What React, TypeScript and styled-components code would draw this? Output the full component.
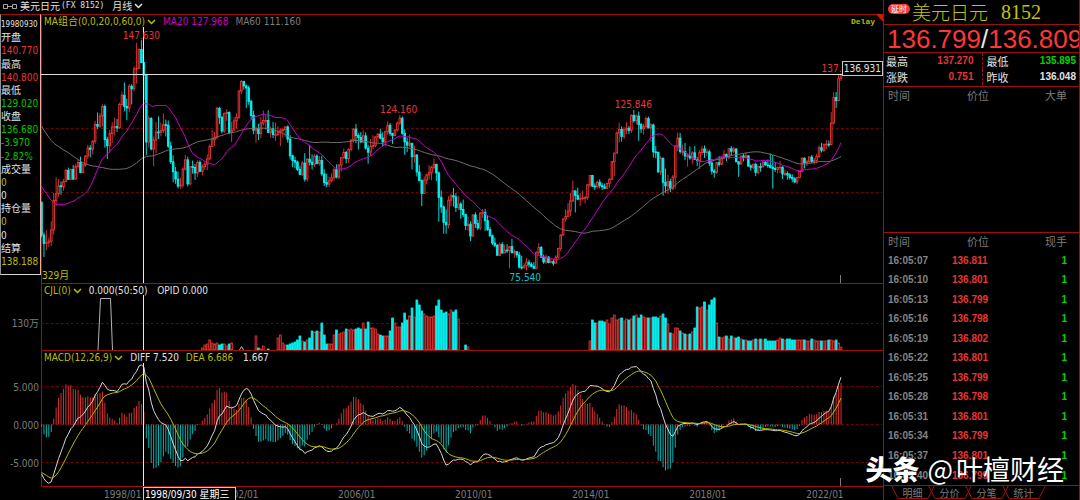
import React from 'react';
import styled, { createGlobalStyle } from 'styled-components';

const RED = '#e83636';
const CYAN = '#00f0f0';
const LINE = '#9c1208';
const YELLOW = '#bcbc00';
const WHITE = '#e2e2e2';
const GREY = '#7c7c7c';
const MAGENTA = '#cc00cc';
const GREEN = '#00c800';

const SANS = '"DejaVu Sans Condensed", "Noto Sans CJK SC", sans-serif';
const CJK = '"Noto Sans CJK SC", sans-serif';

/* Monthly USD/JPY, March 1995 to July 2022: closes, highs and lows, one line a year. */
const CLOSES = `
86.7 84.1 84.4 84.8 88.3 97.5 99.6 102.1 101.8 103.4
106.9 104.1 107.2 104.2 108.1 109.4 106.2 108.6 111.4 113.9 113.5 116.0
121.3 120.7 123.9 126.9 116.5 114.6 118.4 120.5 120.6 120.2 127.5 130.4
126.9 126.4 133.2 132.4 138.6 138.8 144.7 140.6 136.7 115.8 123.1 113.6
116.4 118.9 118.8 119.4 121.2 121.0 114.5 109.6 106.5 104.2 102.0 102.3
107.3 110.2 102.7 108.1 107.8 106.1 109.4 106.6 108.1 108.9 110.5 114.4
116.5 117.3 126.3 123.5 119.2 124.7 125.0 118.8 119.5 122.4 123.5 131.7
134.7 133.3 132.7 128.5 124.1 119.5 119.9 118.4 121.7 122.5 122.5 118.8
119.9 118.1 118.1 118.9 119.3 119.7 120.5 116.7 111.5 110.0 109.5 107.2
105.7 109.2 104.2 110.4 109.5 108.8 111.4 109.1 110.0 105.8 103.1 102.6
103.7 104.6 107.1 104.8 108.6 110.9 112.5 110.6 113.5 116.4 119.8 117.8
117.2 115.8 117.7 113.9 112.6 114.4 114.7 117.4 118.2 117.0 115.8 119.0
121.0 118.5 117.8 119.5 121.7 123.2 118.5 115.8 114.8 115.4 111.2 111.7
106.4 103.7 99.7 103.9 105.5 106.2 107.9 108.8 106.1 98.5 95.5 90.7
89.9 97.6 99.0 98.6 95.3 96.4 94.7 93.1 89.7 90.1 86.4 93.0
90.3 88.9 93.5 93.8 91.2 88.4 86.5 84.2 83.5 80.4 83.7 81.1
82.0 81.8 83.1 81.2 81.5 80.5 76.7 76.6 77.1 78.2 77.6 76.9
76.3 81.2 82.8 79.8 78.3 79.8 78.1 78.4 77.9 79.8 82.5 86.7
91.7 92.5 94.2 97.4 100.5 99.1 97.9 98.2 98.3 98.4 102.4 105.3
102.0 101.8 103.2 102.2 101.8 101.3 102.8 104.1 109.6 112.3 118.6 119.7
117.5 119.6 120.1 119.4 124.1 122.5 123.9 121.2 119.9 120.6 123.1 120.2
121.1 112.7 112.6 106.4 110.7 103.2 102.1 103.4 101.3 104.8 114.5 117.0
112.8 112.8 111.4 111.5 110.8 112.4 110.3 110.0 112.5 113.6 112.5 112.7
109.2 106.7 106.3 109.3 108.8 110.8 111.9 111.0 113.7 112.9 113.6 109.6
108.9 111.4 110.9 111.4 108.3 107.9 108.8 106.3 108.1 108.0 109.5 108.6
108.4 107.9 107.5 107.2 107.8 107.9 105.8 105.9 105.5 104.7 104.3 103.3
104.7 106.6 110.7 109.3 109.6 111.1 109.7 110.0 111.3 114.0 113.2 115.1
115.1 115.0 121.7 129.7 128.7 135.7 136.9`;

const HIGHS = `
97.0 87.5 88.2 85.9 91.0 99.9 104.8 104.2 103.4 104.2
107.4 107.8 107.5 108.6 108.9 110.2 111.2 109.2 111.6 114.9 114.8 116.4
122.4 125.0 124.8 127.5 127.5 117.4 119.6 121.9 123.4 123.0 128.0 131.6
134.4 129.3 133.9 133.8 139.4 146.8 145.0 147.6 140.8 136.0 124.0 123.6
117.5 122.0 123.8 121.8 124.7 122.8 122.5 115.9 111.6 108.0 106.5 104.6
107.9 111.7 111.2 108.3 110.0 108.9 110.0 110.1 108.8 109.5 111.9 115.0
119.5 118.9 126.8 126.8 123.9 125.0 126.1 125.4 122.1 123.5 124.8 132.1
135.2 134.9 133.8 133.4 129.0 125.6 120.6 121.5 123.6 125.6 124.1 125.7
120.6 122.0 121.8 120.7 120.1 120.0 120.7 121.0 117.9 111.8 111.2 110.0
108.3 109.9 112.3 110.7 114.8 111.9 112.0 111.9 111.4 111.5 107.3 105.9
104.9 106.0 107.8 108.8 108.9 111.0 113.7 113.0 113.8 116.6 120.0 121.4
118.5 118.9 119.4 118.8 114.9 116.7 117.9 117.5 118.6 119.9 118.8 119.4
122.2 121.7 118.5 119.9 122.2 124.2 123.8 119.8 117.2 118.0 115.4 114.6
112.0 108.6 104.1 105.0 105.9 108.6 108.3 110.6 109.0 106.6 100.6 96.0
94.7 98.8 99.7 101.4 99.8 98.9 97.0 97.8 93.3 92.5 91.0 93.2
93.8 91.5 93.9 94.9 94.9 92.9 89.2 86.9 85.9 83.9 84.4 84.5
83.7 83.9 83.3 85.5 82.2 81.5 81.5 80.2 77.9 79.5 79.0 78.2
78.3 81.7 84.2 83.3 80.6 80.6 80.1 79.6 79.2 80.4 82.8 87.0
91.9 94.8 96.7 99.9 103.7 100.6 101.5 99.9 100.6 99.0 102.6 105.4
105.5 102.9 103.7 104.1 103.0 102.8 103.1 104.5 109.8 112.5 119.1 121.8
120.7 120.5 122.0 120.8 124.4 125.8 124.5 125.3 121.7 121.5 123.7 123.7
121.7 121.5 114.5 112.6 111.4 110.9 107.5 105.5 104.3 105.5 114.8 118.7
118.6 115.0 115.5 112.2 114.4 112.9 114.5 111.1 113.3 114.5 114.7 113.8
113.4 110.5 107.3 109.5 111.4 111.1 113.2 112.2 113.7 114.5 114.2 113.8
109.8 111.5 112.1 112.4 111.7 108.8 109.0 109.3 108.5 109.3 109.7 109.7
110.3 112.2 111.7 109.4 108.1 109.9 108.2 107.1 106.6 106.1 105.7 104.8
104.9 106.7 111.0 111.0 110.2 111.1 111.7 110.8 112.1 114.7 115.5 115.2
116.4 116.3 125.1 131.3 131.4 137.0 137.3`;

const LOWS = `
86.0 79.8 82.0 83.0 83.3 86.9 95.9 98.6 99.3 100.5
103.2 104.0 104.5 103.9 104.0 107.7 106.3 106.2 108.0 110.5 111.0 111.9
115.2 119.9 120.2 120.7 114.0 110.5 112.6 115.5 117.8 118.9 119.9 127.1
125.4 122.6 125.1 127.5 131.6 134.0 138.9 140.5 129.0 111.6 114.0 113.2
108.2 112.2 116.7 117.6 118.6 117.5 113.9 108.9 103.2 102.7 101.3 101.2
101.5 106.9 101.9 102.3 105.9 103.9 104.9 106.4 105.3 107.1 107.0 110.2
114.5 114.6 116.6 121.4 118.4 118.6 122.4 118.3 115.8 119.5 120.0 123.0
130.8 132.1 126.4 127.4 122.8 118.2 115.5 116.4 117.0 120.9 119.6 118.5
117.2 117.0 116.2 117.7 114.5 117.1 117.4 115.6 110.3 107.9 107.6 106.7
105.4 105.2 103.4 103.4 108.4 107.2 108.0 108.8 108.4 105.1 102.0 101.7
101.7 103.2 103.7 104.4 104.2 106.6 110.4 109.1 109.2 112.8 115.6 115.4
113.4 115.5 115.4 113.4 109.0 111.4 113.6 114.1 115.8 116.6 114.5 114.4
118.0 117.7 115.2 117.5 119.1 121.1 118.0 111.8 112.6 114.2 107.2 109.3
105.0 103.6 95.8 99.7 102.6 104.0 103.8 107.2 103.6 90.9 93.6 87.1
87.1 88.8 95.7 95.6 93.9 94.5 91.8 92.3 88.3 88.0 84.8 86.2
88.9 88.2 88.2 92.0 88.0 88.0 86.0 83.6 82.9 80.2 80.2 80.9
81.1 81.1 76.3 81.0 79.6 79.6 76.3 75.9 76.1 75.6 76.6 76.6
76.1 76.0 80.5 79.6 77.7 77.7 77.9 77.9 77.1 77.8 79.3 81.7
86.5 90.9 92.9 92.6 97.0 93.8 97.6 95.8 97.5 96.6 97.7 101.7
101.7 100.8 101.2 101.3 100.8 101.2 101.1 101.5 103.9 105.2 112.3 115.6
115.9 116.7 118.3 118.3 118.6 121.8 121.3 116.2 118.6 118.1 120.2 120.0
115.9 110.9 110.7 106.3 105.5 99.0 99.9 99.5 100.1 100.7 101.2 112.9
112.1 111.6 110.1 108.1 110.2 108.8 110.2 108.3 107.3 111.7 110.8 111.4
108.3 105.6 104.6 105.7 108.1 108.7 110.3 109.8 110.4 111.4 112.3 109.5
104.9 108.7 109.7 110.8 108.0 106.8 107.2 105.1 105.7 106.5 107.9 108.4
107.7 107.5 101.2 106.4 105.9 106.1 104.2 105.1 104.0 104.0 103.2 102.9
102.6 104.4 106.4 107.5 108.3 109.2 109.1 108.7 109.1 110.8 112.5 112.6
113.5 114.2 114.7 121.3 126.4 128.7 134.8`;

/* The five years before the first candle, which seed the averages. */
const EARLIER = `
157.7 159 151.8 152.9 147.5 144.3 138 129.6 132.8 135.7
131.5 132.9 140.6 136.5 138.4 138 137.6 136.9 133 130.9 130 124.9
125.8 129.3 133 133.4 127.6 125.6 127.2 123.1 120 123.4 124.7 124.9
124.8 118 114.8 111 107.5 106.8 104.7 104.6 105.9 108.2 108.8 111.8
109 104.3 102.6 101.5 104.8 98.6 100 100 99 96.8 99 99.6
98.6 96.6`;

/* Runs of volume bars: the index of the first bar, then the heights. */
const VOLUMES: Array<[number, string]> = [
  [66, '2 5 6 10 7 6 7 5 6 6 4 6 7'],
  [88, '14 2 1 4 0 1'],
  [97, `12 15 7 5 5 6 7 8 10 14 9 8 10 12 19 18 19 18 27 15 6 6 6 15 20 16 17 18 21 20 21 20
   21 22 21 27 21 28 22 22 21 16 15 14 14 14 19 32 27 23 23 27 37 30 34 42 33 50 45 39 36 34
   33 33 34 44 50 40 37 38 36 40 38 40 31`],
  [174, '5 3'],
  [225, `9 30 27 27 29 29 28 30 26 32 35 30 31 32 29 31 30 31 34 35 32 35 33 32 32 32 33 33 32
   34 36 32 26 17 16 22 22 19 17 16 15 16 18 22 43 42 43 48 40 45 50 52 27 13 12 13 14 11 14
   12 12 13 11 10 10 9 9 10 11 10 11 10 11 9 9 9 9 10 12 11 10 11 11 10 10 10 10 10 10 9 9 11
   10 9 9 9 9 9 10 10 9 10 7 3`],
];

const nums = (s: string) => s.trim().split(/\s+/).map(Number);
const closes = nums(CLOSES);
const highs = nums(HIGHS);
const lows = nums(LOWS);
const series = [...nums(EARLIER), ...closes];
const OFFSET = series.length - closes.length;

const X0 = 41.5;
const STEP = 2.4375;
const x = (i: number) => X0 + i * STEP;
const py = (p: number) => 128.5 + (120 - p) * 3.2;
const my = (v: number) => 424.5 - v * 7.6;

const candles = closes.map((c, i) => {
  const o = i === 0 ? 97 : closes[i - 1];
  return { i, o, c, h: Math.max(highs[i], o, c), l: Math.min(lows[i], o, c), up: c >= o };
});

const average = (n: number) =>
  closes.map((_, i) => {
    const end = i + OFFSET + 1;
    const part = series.slice(end - n, end);
    return part.reduce((a, b) => a + b, 0) / n;
  });

const ema = (values: number[], n: number) => {
  let last = values[0];
  return values.map(v => (last = last + (2 / (n + 1)) * (v - last)));
};

const fast = ema(series, 12);
const slow = ema(series, 26);
const diffAll = fast.map((v, i) => v - slow[i]);
const deaAll = ema(diffAll, 9);
const diff = diffAll.slice(OFFSET);
const dea = deaAll.slice(OFFSET);

const points = (values: number[], y: (v: number) => number) =>
  values.map((v, i) => `${x(i).toFixed(1)},${y(v).toFixed(1)}`).join(' ');

const trades = [
  ['16:05:07', '136.811'],
  ['16:05:10', '136.801'],
  ['16:05:13', '136.799'],
  ['16:05:16', '136.798'],
  ['16:05:19', '136.802'],
  ['16:05:22', '136.801'],
  ['16:05:25', '136.799'],
  ['16:05:28', '136.798'],
  ['16:05:31', '136.801'],
  ['16:05:34', '136.799'],
  ['16:05:37', '136.801'],
  ['16:05:40', '136.799'],
];

const readings: Array<[string, string]> = [
  ['开盘', WHITE],
  ['140.770', RED],
  ['最高', WHITE],
  ['140.800', RED],
  ['最低', WHITE],
  ['129.020', GREEN],
  ['收盘', WHITE],
  ['136.680', GREEN],
  ['-3.970', GREEN],
  ['-2.82%', GREEN],
  ['成交量', WHITE],
  ['0', YELLOW],
  ['0', WHITE],
  ['持仓量', WHITE],
  ['0', YELLOW],
  ['0', WHITE],
  ['结算', WHITE],
  ['138.188', YELLOW],
];

const Global = createGlobalStyle`
  *, *::before, *::after { box-sizing: border-box; }
  body { margin: 0; background: #000; color: ${WHITE}; font: 10px/13px ${SANS}; }
  button, select { font: inherit; color: inherit; background: none; border: 0; padding: 0; margin: 0; cursor: pointer; }
`;

const Screen = styled.main`
  position: relative;
  display: grid;
  grid-template-columns: minmax(0, 1fr) 197px;
  min-height: 100vh;
  overflow: hidden;
  background: #000;
`;

const Desk = styled.section`
  display: grid;
  grid-template-columns: 41px minmax(0, 1fr);
  grid-template-rows: 14px minmax(269px, 269fr) minmax(67px, 67fr) minmax(136px, 136fr) 14px;
`;

const TitleBar = styled.header`
  grid-column: 1 / -1;
  display: flex;
  align-items: center;
  padding: 0 0 2px 3px;
  white-space: pre;
  font: 10px/12px ${CJK};
`;

const LinkIcon = styled.svg`
  width: 14px;
  height: 5px;
  margin-right: 3px;
`;

const Code = styled.span`
  margin: 0 8px 0 1px;
  font: 8px/12px "DejaVu Sans Mono", monospace;
`;

const Period = styled.select`
  appearance: none;
  width: 22px;
  height: 12px;
  font: 10px/12px ${CJK};
`;

const Chevron = styled.svg`
  width: 9px;
  height: 6px;
  fill: none;
  stroke: currentColor;
  stroke-width: 1.5;
`;

const Gutter = styled.div`
  position: relative;
  color: ${GREY};
`;

const Readings = styled.aside`
  display: flex;
  flex-direction: column;
  height: calc(100% - 8px);
  padding: 3px 0 6px;
  border: 1px solid #d8d8d8;
  border-left-color: #909090;
  border-top-color: ${LINE};
  border-right-color: #f0a8a0;
`;

const Reading = styled.div<{ $tone: string }>`
  flex: 1;
  display: flex;
  align-items: center;
  color: ${p => p.$tone};
  white-space: nowrap;
`;

const ReadingDate = styled(Reading)`
  font-size: 8px;
`;

const ScaleLabel = styled.span<{ $top: string }>`
  position: absolute;
  right: 2px;
  top: ${p => p.$top};
  transform: translateY(-50%);
`;

const Panel = styled.div`
  position: relative;
  border-top: 1px solid ${LINE};
  border-left: 1px solid ${LINE};
`;

const Plot = styled.svg`
  position: absolute;
  inset: -1px 0 0 -1px;
  width: calc(100% + 1px);
  height: calc(100% + 1px);
`;

const Legend = styled.div`
  position: relative;
  display: flex;
  align-items: center;
  gap: 7px;
  padding: 1px 0 0 2px;
  white-space: pre;
  line-height: 12px;
`;

const Indicator = styled.button`
  display: flex;
  align-items: center;
  gap: 2px;
  color: ${YELLOW};
`;

const Tone = styled.span<{ $tone: string }>`
  color: ${p => p.$tone};
`;

const Delay = styled.span`
  position: absolute;
  right: 8px;
  top: 1px;
  color: ${YELLOW};
  font: bold 8px/12px "Liberation Mono", monospace;
`;

const Mark = styled.span<{ $left: string; $top: string; $tone: string }>`
  position: absolute;
  left: ${p => p.$left};
  top: ${p => p.$top};
  transform: translateY(-50%);
  color: ${p => p.$tone};
`;

const PriceTag = styled.output`
  position: absolute;
  right: 0;
  top: 17%;
  height: 15px;
  padding: 0 1px;
  border: 1px solid #c8c8c8;
  background: #000;
  color: ${WHITE};
`;

const TimeAxis = styled.div`
  grid-column: 2;
  position: relative;
  border-top: 1px solid ${LINE};
  color: ${GREY};
`;

const Tick = styled.span<{ $left: string }>`
  position: absolute;
  top: 1px;
  left: ${p => p.$left};
  transform: translateX(-50%);
`;

const DateTag = styled.output`
  position: absolute;
  left: 12.1%;
  top: 0;
  height: 14px;
  padding: 0 5px 0 1px;
  border: 1px solid #e0c8c8;
  background: #000;
  color: #fff;
  white-space: nowrap;
`;

const Quote = styled.aside`
  display: flex;
  flex-direction: column;
  min-width: 0;
  border-left: 1px solid ${LINE};
  border-right: 1px solid ${LINE};
  overflow: hidden;
`;

const Name = styled.h1`
  display: flex;
  align-items: center;
  gap: 2px;
  height: 25px;
  margin: 0;
  padding-left: 4px;
  border-bottom: 1px solid ${LINE};
  color: #c4c400;
  white-space: nowrap;
  font: 300 19px/24px ${CJK};
`;

const Symbol = styled.span`
  margin-left: 11px;
  font: 20px/24px "Liberation Serif", serif;
`;

const Badge = styled.span`
  align-self: flex-start;
  margin-top: 4px;
  padding: 0 3px;
  border-radius: 5px;
  background: #f23c3c;
  color: #fff;
  font: 8px/10px ${CJK};
`;

const Price = styled.div`
  height: 28px;
  padding-left: 3px;
  border-bottom: 1px solid ${LINE};
  color: #ff3636;
  white-space: nowrap;
  font: 26px/28px "Liberation Sans", sans-serif;
`;

const Figures = styled.dl`
  display: grid;
  grid-template-columns: 1fr 1fr;
  height: 34px;
  margin: 0;
  padding: 0 0 2px 2px;
  border-bottom: 1px solid ${LINE};
`;

const Figure = styled.div<{ $divided?: boolean; $tone: string }>`
  display: flex;
  align-items: center;
  justify-content: space-between;
  padding: 0 ${p => (p.$divided ? 8 : 3)}px 0 ${p => (p.$divided ? 0 : 4)}px;
  border-right: ${p => (p.$divided ? `1px dashed ${LINE}` : '0')};
  color: ${p => p.$tone};
  dt { color: ${WHITE}; font: 11px/16px ${CJK}; }
  dd { margin: 0; font: bold 10px/16px "Liberation Sans", sans-serif; }
`;

const Block = styled.div<{ $grow: number }>`
  flex: ${p => p.$grow} 0 0;
  border-bottom: 1px solid ${LINE};
`;

const Table = styled.table`
  width: 100%;
  border-collapse: collapse;
  table-layout: fixed;
  th { height: 17px; padding: 0; color: ${GREY}; font: 11px/17px ${CJK}; text-align: left; }
  td { padding: 0; font: bold 10px/15px "Liberation Sans", sans-serif; color: ${RED}; }
  th:first-child, td:first-child { width: 68px; padding-left: 4px; }
  th:nth-child(2) { padding-left: 15px; }
  th:last-child, td:last-child { width: 60px; padding-right: 12px; text-align: right; }
  td:first-child { color: #848484; }
  td:last-child { color: #00d400; }
`;

const FullTable = styled(Table)`
  height: 100%;
`;

const Tabs = styled.nav`
  display: flex;
  height: 14px;
  padding-left: 7px;
`;

const Tab = styled.button`
  position: relative;
  width: 37px;
  padding: 0 0 1px 6px;
  color: ${GREY};
  font: 10px/13px ${CJK};
  svg { position: absolute; left: 0; top: -1px; width: 44px; height: 14px; fill: none; stroke: ${LINE}; }
`;

const Watermark = styled.div`
  position: absolute;
  right: 16px;
  bottom: 12px;
  display: flex;
  align-items: baseline;
  color: #fff;
  font: 27px/38px ${CJK};
  pointer-events: none;
  b { margin-right: 8px; font-weight: 900; }
  i { margin-right: 3px; font-style: normal; }
`;

const Down = () => (
  <Chevron viewBox="0 0 9 6" aria-hidden="true">
    <path d="M1 1 4.500 4.500 8 1" />
  </Chevron>
);

const Grid = ({ at }: { at: number }) => (
  <line x1="41" x2="882" y1={at} y2={at} stroke="#7c0000" strokeDasharray="2.500 2.500" />
);

const PricePlot = () => (
  <Plot viewBox="41 14 842 269" preserveAspectRatio="none" role="img" aria-label="月线K线图">
    <Grid at={128.5} />
    <Grid at={192.5} />
    {candles.map(k => {
      const top = py(Math.max(k.o, k.c));
      const bottom = Math.max(py(Math.min(k.o, k.c)), top + 0.8);
      const tone = k.up ? RED : CYAN;
      return (
        <g key={k.i} stroke={tone}>
          <line x1={x(k.i)} x2={x(k.i)} y1={py(k.h)} y2={py(k.l)} strokeWidth="0.9" />
          <rect
            x={x(k.i) - 0.8}
            y={top}
            width="1.6"
            height={bottom - top}
            fill={k.up ? '#300808' : tone}
            strokeWidth="0.9"
          />
        </g>
      );
    })}
    <polyline points={points(average(60), py)} fill="none" stroke="#707070" />
    <polyline points={points(average(20), py)} fill="none" stroke={MAGENTA} />
    <line x1="143.5" x2="143.5" y1="27" y2="283" stroke="#e8e8e8" />
    <line x1="41" x2="882" y1="74.500" y2="74.500" stroke="#dcdcdc" />
    <line x1="868" x2="882" y1="75.500" y2="75.500" stroke={YELLOW} />
    <line x1="840.500" x2="840.500" y1="275" y2="283" stroke={GREY} />
    <path d="M876 14h7v8z" fill="#d01808" />
  </Plot>
);

const VolumePlot = () => (
  <Plot viewBox="41 283 842 67" preserveAspectRatio="none" role="img" aria-label="成交量">
    <Grid at={323.5} />
    {VOLUMES.flatMap(([start, list]) =>
      nums(list).map((h, n) => {
        const i = start + n;
        if (!h || i >= candles.length) return null;
        const up = candles[i].up;
        return (
          <rect
            key={i}
            x={x(i) - 0.9}
            y={350 - h}
            width="1.8"
            height={h}
            fill={up ? '#4a0c0c' : CYAN}
            stroke={up ? RED : CYAN}
            strokeWidth="0.8"
          />
        );
      }),
    )}
    <path d="M98 350 100.500 298.500H110.500L112.500 350M239.500 350 241.500 346.500 243.500 350" fill="none" stroke="#b4b4b4" />
    <line x1="143.5" x2="143.5" y1="295" y2="350" stroke="#e8e8e8" />
  </Plot>
);

const MacdPlot = () => (
  <Plot viewBox="41 350 842 136" preserveAspectRatio="none" role="img" aria-label="MACD">
    <Grid at={386.5} />
    <Grid at={424.5} />
    <Grid at={462.5} />
    {diff.map((d, i) => {
      const bar = 2 * (d - dea[i]);
      return (
        <line
          key={i}
          x1={x(i)}
          x2={x(i)}
          y1={my(0)}
          y2={my(bar)}
          stroke={bar > 0 ? '#d83030' : '#00b4b4'}
          strokeWidth="1"
        />
      );
    })}
    <polyline points={points(diff, my)} fill="none" stroke="#d8d8d8" />
    <polyline points={points(dea, my)} fill="none" stroke="#b8b800" />
    <line x1="143.5" x2="143.5" y1="363" y2="486" stroke="#e8e8e8" />
    <line x1="840.500" x2="840.500" y1="478" y2="486" stroke={GREY} />
  </Plot>
);

export default function App() {
  return (
    <>
      <Global />
      <Screen>
        <Desk>
          <TitleBar>
            <LinkIcon viewBox="0 0 14 5" fill="none" stroke="#a8a8a8" aria-hidden="true">
              <path d="M.5.5h4v4h-4zM9.500.5h4v4h-4zM4.500 2.500h5" />
            </LinkIcon>
            美元日元
            <Code>(FX 8152)</Code>
            <Period aria-label="周期" defaultValue="月线">
              <option>月线</option>
              <option>周线</option>
              <option>日线</option>
            </Period>
            <Down />
          </TitleBar>

          <Gutter>
            <Readings aria-label="光标数据">
              <ReadingDate $tone={WHITE}>19980930</ReadingDate>
              {readings.map(([text, tone], i) => (
                <Reading key={i} $tone={tone}>
                  {text}
                </Reading>
              ))}
            </Readings>
          </Gutter>
          <Panel>
            <PricePlot />
            <Legend>
              <Indicator>
                MA组合(0,0,20,0,60,0)
                <Down />
              </Indicator>
              <Tone $tone={MAGENTA}>MA20 127.968</Tone>
              <Tone $tone={GREY}>MA60 111.160</Tone>
            </Legend>
            <Delay>Delay</Delay>
            <Mark $left="9.6%" $top="7.6%" $tone={RED}>147.630</Mark>
            <Mark $left="40.2%" $top="35.1%" $tone={RED}>124.160</Mark>
            <Mark $left="68.1%" $top="33.1%" $tone={RED}>125.846</Mark>
            <Mark $left="92.7%" $top="19.8%" $tone={RED}>137.270</Mark>
            <Mark $left="55.6%" $top="97.8%" $tone="#00c8c8">75.540</Mark>
            <Mark $left="0" $top="97.1%" $tone={YELLOW}>329月</Mark>
            <PriceTag>136.931</PriceTag>
          </Panel>

          <Gutter>
            <ScaleLabel $top="60%">130万</ScaleLabel>
          </Gutter>
          <Panel>
            <VolumePlot />
            <Legend>
              <Indicator>
                CJL(0)
                <Down />
              </Indicator>
              <span>0.000(50:50)</span>
              <span> OPID 0.000</span>
            </Legend>
          </Panel>

          <Gutter>
            <ScaleLabel $top="27%">5.000</ScaleLabel>
            <ScaleLabel $top="55%">0.000</ScaleLabel>
            <ScaleLabel $top="83%">-5.000</ScaleLabel>
          </Gutter>
          <Panel>
            <MacdPlot />
            <Legend>
              <Indicator>
                MACD(12,26,9)
                <Down />
              </Indicator>
              <span>DIFF 7.520</span>
              <Tone $tone={YELLOW}>DEA 6.686</Tone>
              <span> 1.667</span>
            </Legend>
          </Panel>

          <TimeAxis>
            <Tick $left="9.7%">1998/01</Tick>
            <Tick $left="23.6%">2002/01</Tick>
            <Tick $left="37.5%">2006/01</Tick>
            <Tick $left="51.4%">2010/01</Tick>
            <Tick $left="65.3%">2014/01</Tick>
            <Tick $left="79.2%">2018/01</Tick>
            <Tick $left="93.1%">2022/01</Tick>
            <DateTag>1998/09/30 星期三</DateTag>
          </TimeAxis>
        </Desk>

        <Quote>
          <Name>
            <Badge>延时</Badge>
            美元日元
            <Symbol>8152</Symbol>
          </Name>
          <Price>
            136.799<Tone $tone="#e8e8e8">/</Tone>136.809
          </Price>
          <Figures>
            <Figure $divided $tone={RED}>
              <dt>最高</dt>
              <dd>137.270</dd>
            </Figure>
            <Figure $tone="#00d400">
              <dt>最低</dt>
              <dd>135.895</dd>
            </Figure>
            <Figure $divided $tone={RED}>
              <dt>涨跌</dt>
              <dd>0.751</dd>
            </Figure>
            <Figure $tone={WHITE}>
              <dt>昨收</dt>
              <dd>136.048</dd>
            </Figure>
          </Figures>
          <Block $grow={146}>
            <Table>
              <thead>
                <tr>
                  <th>时间</th>
                  <th>价位</th>
                  <th>大单</th>
                </tr>
              </thead>
            </Table>
          </Block>
          <Block $grow={253}>
            <FullTable>
              <thead>
                <tr>
                  <th>时间</th>
                  <th>价位</th>
                  <th>现手</th>
                </tr>
              </thead>
              <tbody>
                {trades.map(([time, price]) => (
                  <tr key={time}>
                    <td>{time}</td>
                    <td>{price}</td>
                    <td>1</td>
                  </tr>
                ))}
              </tbody>
            </FullTable>
          </Block>
          <Tabs aria-label="明细视图">
            {['明细', '分价', '分笔', '统计'].map(t => (
              <Tab key={t}>
                <svg viewBox="0 0 44 14" aria-hidden="true">
                  <path d="M.5.5 7 13.500H37L43.500.5" />
                </svg>
                {t}
              </Tab>
            ))}
          </Tabs>
        </Quote>

        <Watermark>
          <b>头条</b>
          <i>@</i>
          <span>叶檀财经</span>
        </Watermark>
      </Screen>
    </>
  );
}
